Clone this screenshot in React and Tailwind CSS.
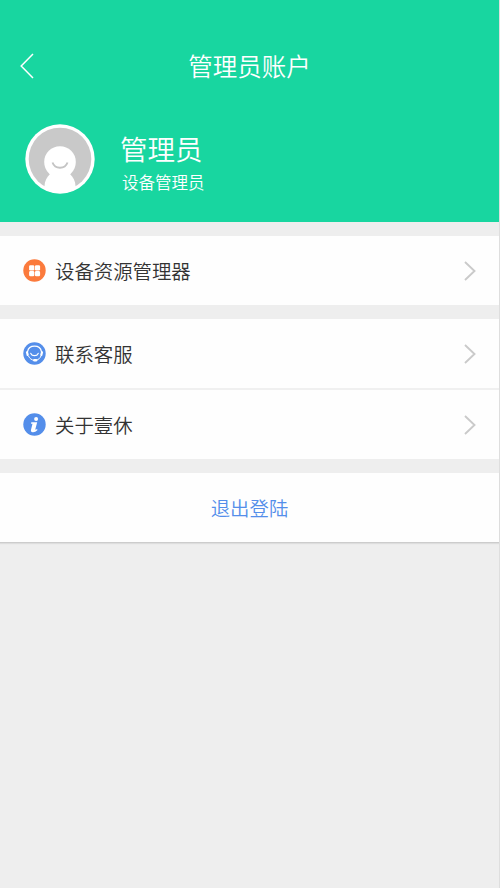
import React from 'react';

const BackIcon = () => (
    <svg width="14" height="26" viewBox="0 0 14 26" fill="none" stroke="#fff" strokeWidth="1.5">
        <path d="M13 1 1.2 13 13 25" />
    </svg>
);

const ChevronIcon = () => (
    <svg width="12" height="20" viewBox="0 0 12 20" fill="none" stroke="#cacaca" strokeWidth="1.9">
        <path d="M1 1l9.5 9L1 19" />
    </svg>
);

const Avatar = () => (
    <svg width="70" height="70" viewBox="0 0 70 70">
        <defs>
            <clipPath id="avatar">
                <circle cx="35" cy="35" r="34" />
            </clipPath>
        </defs>
        <circle cx="35" cy="35" r="34.7" fill="#fff" />
        <circle cx="35" cy="35" r="31.3" fill="#c9c9c9" />
        <g clipPath="url(#avatar)" fill="#fff">
            <circle cx="35" cy="38" r="15.8" />
            <path d="M25 50h20c3 3 5.5 7 5.5 12v8h-31v-8c0-5 2.5-9 5.5-12z" />
        </g>
        <path d="M27.5 38.5c2.5 7 12.5 7 15 0" fill="none" stroke="#c4c4c4" strokeWidth="1.9" />
    </svg>
);

const ResourceIcon = () => (
    <svg width="23" height="23" viewBox="0 0 23 23">
        <circle cx="11.5" cy="11.5" r="11.2" fill="#fb7a3c" />
        <g fill="#fff">
            <rect x="6.1" y="6.3" width="5.2" height="5.2" rx="1.3" />
            <rect x="11.9" y="6.3" width="5.2" height="5.2" rx="1.3" />
            <rect x="6.1" y="12.1" width="5.2" height="5.2" rx="1.3" />
            <rect x="11.9" y="12.1" width="5.2" height="5.2" rx="1.3" />
        </g>
    </svg>
);

const SupportIcon = () => (
    <svg width="23" height="23" viewBox="0 0 23 23" fill="none" stroke="#fff" strokeLinecap="round">
        <circle cx="11.5" cy="11.5" r="11.2" fill="#548eea" stroke="none" />
        <path d="M4.6 9.5C5.8 2.400 17.200 2.400 18.400 9.500" strokeWidth="1.300" />
        <path d="M4 10.200l.7 2.800M19 10.200l-.7 2.800" strokeWidth="2.200" />
        <path d="M7.800 11.400c1.300 3 6.100 3 7.400 0" strokeWidth="1.200" />
        <path d="M5.600 14.300c1.200 2.400 3 3.700 5.400 4M18 14c-.8 2.200-2.300 3.500-4.500 4.100" strokeWidth="1" />
        <path d="M11.400 18.200h1.600" strokeWidth="2.500" />
    </svg>
);

const AboutIcon = () => (
    <svg width="23" height="23" viewBox="0 0 23 23">
        <circle cx="11.5" cy="11.5" r="11.2" fill="#548eea" />
        <circle cx="13.1" cy="6" r="2" fill="#fff" />
        <path d="M8.300 9.200h5.900l-1.800 6.900c-.2.800.4.800 1.600 0l.5.900c-1.700 1.700-3.300 2.400-4.900 2.200-1.400-.2-1.900-1.200-1.600-2.500l1.500-5.900H8z" fill="#fff" />
    </svg>
);

const MenuRow = ({ icon, label }) => (
    <button className="flex h-[69px] w-full items-center bg-[#fefefe] pl-[23px] pr-[23px]">
        {icon}
        <span className="ml-[9px] flex-1 text-left text-[19.4px] leading-7 text-[#333]">{label}</span>
        <ChevronIcon />
    </button>
);

export default function App() {
    return (
        <div className="min-h-screen border-r border-[#dedede] bg-[#eee] font-['Noto_Sans_CJK_SC',sans-serif] font-[350]">
            <header className="h-[222px] bg-[#18d6a0] pt-[46px] text-white">
                <div className="grid h-10 grid-cols-[1fr_auto_1fr] items-center pl-5 pr-5">
                    <button><BackIcon /></button>
                    <h1 className="text-[24.5px] font-[350] leading-10">管理员账户</h1>
                </div>
                <div className="mt-[38px] flex h-[70px] items-center pl-[25px]">
                    <Avatar />
                    <div className="ml-[25px] pt-[5px]">
                        <p className="text-[27.5px] leading-9">管理员</p>
                        <p className="ml-0.5 mt-1 text-[16.5px] leading-6">设备管理员</p>
                    </div>
                </div>
            </header>

            <main className="mt-3.5">
                <MenuRow icon={<ResourceIcon />} label="设备资源管理器" />
                <div className="mt-3.5">
                    <MenuRow icon={<SupportIcon />} label="联系客服" />
                    <div className="h-0.5 bg-[#f0f0f0]" />
                    <MenuRow icon={<AboutIcon />} label="关于壹休" />
                </div>
                <button className="mt-3.5 h-[70px] w-full border-b border-[#ccc] bg-[#fefefe] text-[19.4px] text-[#548eea] shadow-[0_1px_1px_#ddd]">
                    退出登陆
                </button>
            </main>
        </div>
    );
}
